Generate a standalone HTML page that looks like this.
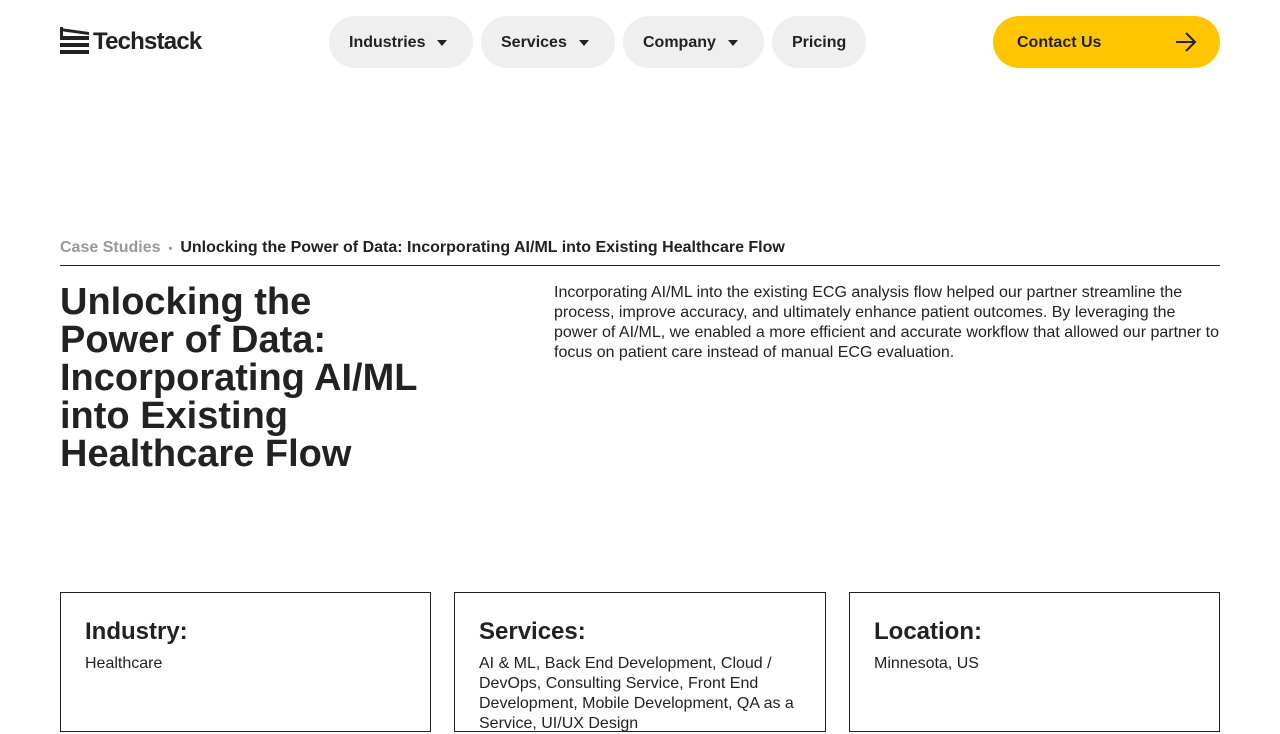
<!DOCTYPE html>
<html><head><meta charset="utf-8"><style>
*{box-sizing:border-box;margin:0;padding:0}
body{width:1280px;height:720px;overflow:hidden;background:#fff;font-family:"Liberation Sans",Arial,sans-serif;color:#222;position:relative}
.logo{position:absolute;left:60px;top:27px;display:flex;align-items:center}
.logo span{font-weight:bold;font-size:24px;letter-spacing:-0.8px;margin-left:4px;color:#222}
.nav{position:absolute;top:16px;height:52px;border-radius:26px;background:#efefef;font-weight:bold;font-size:16px;display:flex;align-items:center;padding-left:20px;padding-top:2px;color:#222}
.tri{width:0;height:0;border-left:5px solid transparent;border-right:5px solid transparent;border-top:6px solid #222;margin-left:12px}
.contact{position:absolute;left:993px;top:16px;width:227px;height:52px;border-radius:26px;background:#ffc600;font-weight:bold;font-size:16px;padding-left:24px;padding-top:2px;display:flex;align-items:center}
.bc{position:absolute;left:60px;top:239px;font-size:16px;font-weight:bold;color:#222}
.bc .g{color:#999}
.line{position:absolute;left:60px;top:265px;width:1160px;height:1px;background:#222}
h1{position:absolute;left:60px;top:283px;width:365px;font-size:38px;line-height:38px;font-weight:bold;color:#222}
.desc{position:absolute;left:554px;top:283px;width:667px;font-size:16px;line-height:20px;color:#222}
.card{position:absolute;top:592px;width:371px;height:140px;border:1px solid #222;padding:25px 24px}
.card h3{font-size:24px;font-weight:bold;margin-bottom:8px}
.card p{font-size:16px;line-height:20px}
</style></head><body>
<div class="logo"><svg width="29" height="29" viewBox="0 0 29 29"><path d="M0 1 L29 5 V8 L0 4Z M0 9H29V13H0Z M0 16H29V20H0Z M0 23H29V27H0Z" fill="#222"/><rect x="0" y="0" width="3" height="9" fill="#222"/></svg><span>Techstack</span></div>
<div class="nav" style="left:329px;width:144px">Industries<div class="tri"></div></div>
<div class="nav" style="left:481px;width:134px">Services<div class="tri"></div></div>
<div class="nav" style="left:623px;width:141px">Company<div class="tri"></div></div>
<div class="nav" style="left:772px;width:94px">Pricing</div>
<div class="contact">Contact Us<svg style="position:absolute;left:182px;top:16px" width="22" height="20" viewBox="0 0 22 20"><path d="M1 10H20M11 1L20 10L11 19" fill="none" stroke="#222" stroke-width="2"/></svg></div>
<div class="bc"><span class="g">Case Studies</span><span class="g" style="margin:0 8px;font-size:11px">•</span><span>Unlocking the Power of Data: Incorporating AI/ML into Existing Healthcare Flow</span></div>
<div class="line"></div>
<h1>Unlocking the Power of Data: Incorporating AI/ML into Existing Healthcare Flow</h1>
<div class="desc">Incorporating AI/ML into the existing ECG analysis flow helped our partner streamline the process, improve accuracy, and ultimately enhance patient outcomes. By leveraging the power of AI/ML, we enabled a more efficient and accurate workflow that allowed our partner to focus on patient care instead of manual ECG evaluation.</div>
<div class="card" style="left:60px"><h3>Industry:</h3><p>Healthcare</p></div>
<div class="card" style="left:454px;width:372px"><h3>Services:</h3><p>AI &amp; ML, Back End Development, Cloud / DevOps, Consulting Service, Front End Development, Mobile Development, QA as a Service, UI/UX Design</p></div>
<div class="card" style="left:849px"><h3>Location:</h3><p>Minnesota, US</p></div>
</body></html>
